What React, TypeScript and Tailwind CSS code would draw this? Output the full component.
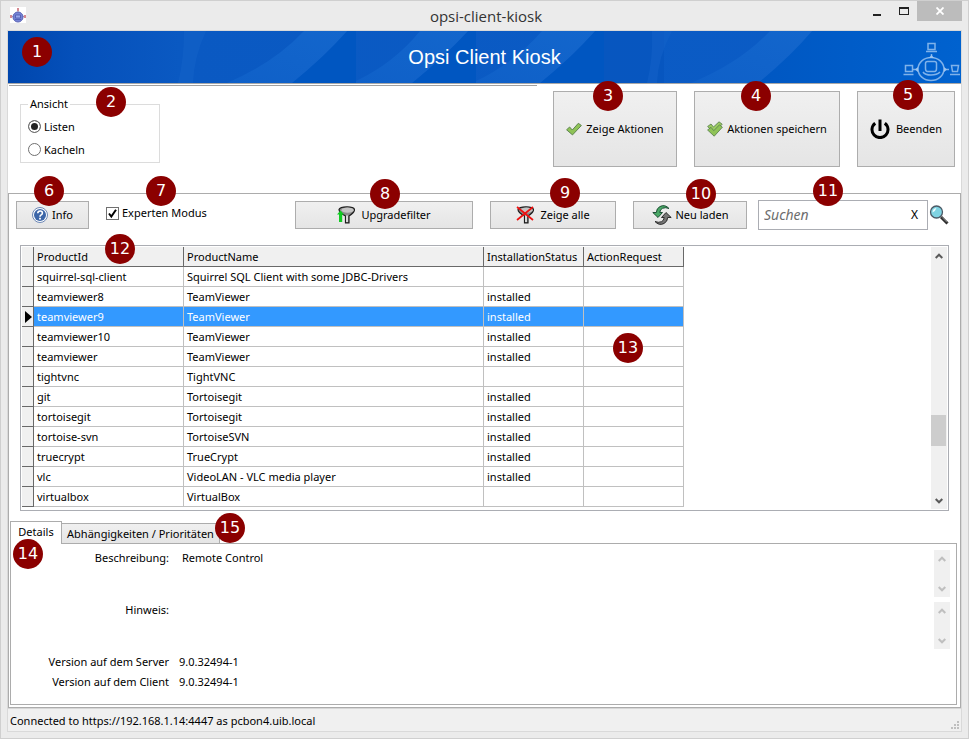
import React, { useState } from "react";

type Product = { id: string; name: string; status: string };

const products: Product[] = [
  { id: "squirrel-sql-client", name: "Squirrel SQL Client with some JDBC-Drivers", status: "" },
  { id: "teamviewer8", name: "TeamViewer", status: "installed" },
  { id: "teamviewer9", name: "TeamViewer", status: "installed" },
  { id: "teamviewer10", name: "TeamViewer", status: "installed" },
  { id: "teamviewer", name: "TeamViewer", status: "installed" },
  { id: "tightvnc", name: "TightVNC", status: "" },
  { id: "git", name: "Tortoisegit", status: "installed" },
  { id: "tortoisegit", name: "Tortoisegit", status: "installed" },
  { id: "tortoise-svn", name: "TortoiseSVN", status: "installed" },
  { id: "truecrypt", name: "TrueCrypt", status: "installed" },
  { id: "vlc", name: "VideoLAN - VLC media player", status: "installed" },
  { id: "virtualbox", name: "VirtualBox", status: "" },
];

/* Numbered call-out that floats over the control it explains. */
function Marker({ n, at }: { n: number; at: string }) {
  return (
    <span
      className={`pointer-events-none absolute z-10 flex size-[30px] items-center justify-center rounded-full bg-[#8b0000] font-['DejaVu_Sans',sans-serif] text-[16px] leading-none text-white ${at}`}
    >
      {n}
    </span>
  );
}

function AppIcon() {
  return (
    <svg className="size-4 bg-white" viewBox="0 0 16 16" aria-hidden="true">
      <path d="M8 1v5M1 9.500h14" stroke="#c9a0a8" strokeWidth="1" />
      <rect x="7" y="1" width="2" height="3" fill="#d58a92" />
      <rect x="0" y="8" width="2" height="3" fill="#d58a92" />
      <rect x="14" y="8" width="2" height="3" fill="#d58a92" />
      <circle cx="8" cy="10" r="5" fill="#7684d6" stroke="#5a62b4" />
      <path d="M5.500 8h5v3h-5zM5 12.500h6" fill="#98a6ec" stroke="#4b58ac" strokeWidth="0.800" />
    </svg>
  );
}

function Banner() {
  return (
    <svg className="absolute inset-0 size-full" viewBox="0 0 953 52" preserveAspectRatio="none" aria-hidden="true">
      <defs>
        <linearGradient id="base" x1="0" x2="1" y1="0" y2="0">
          <stop offset="0" stopColor="#0046ad" />
          <stop offset="0.070" stopColor="#0550ba" />
          <stop offset="0.180" stopColor="#0a59c2" />
          <stop offset="1" stopColor="#0b5cc6" />
        </linearGradient>
        <linearGradient id="sweep" x1="0" x2="1" y1="1" y2="0">
          <stop offset="0" stopColor="#0f60c8" />
          <stop offset="1" stopColor="#1366cc" />
        </linearGradient>
        <linearGradient id="tail" x1="0" x2="1" y1="0" y2="0">
          <stop offset="0" stopColor="#0057c2" />
          <stop offset="1" stopColor="#0062cf" />
        </linearGradient>
      </defs>
      <rect width="953" height="52" fill="url(#base)" />
      <path d="M176 0h22q-12 26-13 52h-15q6-24 6-52z" fill="#1463c8" opacity="0.550" />
      <path d="M339 0L318 22L284 52H348V0z" fill="#0056c1" />
      <path d="M296 0H339Q316 26 284 52H219Q266 32 296 0z" fill="url(#sweep)" />
      <path d="M460 0L438 22L404 52H468V0z" fill="#0056c1" />
      <path d="M412 0H460Q436 26 404 52H348V50Q386 32 412 0z" fill="url(#sweep)" />
      <path d="M587 0L566 22L532 52H596V0z" fill="#0056c1" />
      <path d="M534 0H587Q564 26 532 52H468V50Q506 32 534 0z" fill="url(#sweep)" />
      <rect x="596" width="60" height="52" fill="#0553bd" opacity="0.600" />
      <path d="M644 0h20q-14 26-15 52h-10q6-24 5-52z" fill="#1463c8" opacity="0.550" />
      <path d="M804 0L750 52H953V0z" fill="url(#tail)" />
      <path d="M762 0H804Q782 26 750 52H683Q732 32 762 0z" fill="url(#sweep)" />
    </svg>
  );
}

function NetworkLogo() {
  return (
    <svg
      className="absolute right-0 bottom-0 h-[42px] w-[58px]"
      viewBox="0 0 58 42"
      fill="none"
      stroke="#7fb2ea"
      strokeWidth="1.500"
      aria-hidden="true"
    >
      <ellipse cx="28" cy="28" rx="13" ry="11.500" />
      <path d="M22.500 22.500q0-2 2-2h7q2 0 2 2v5q0 3-2 3h-7q-2 0-2-3zM20 31q2 3 8 3t9-3" />
      <path d="M25 2.500h7v6h-7zM23 10.500h11M28.500 13v3" />
      <path d="M2.500 24.500h7v6h-7zM0.500 33.500h10" />
      <path d="M48.500 24.500h7l-1 6h-5zM47 33.500h10" />
      <path d="M10 28.500h5M42 28.500h4" />
      <path d="M26 17l2.500-3 2.500 3zM15 26v5l-3-2.500zM41 26v5l3-2.500z" fill="#9cc4f0" stroke="none" />
    </svg>
  );
}

function CheckIcon({ double = false }: { double?: boolean }) {
  return (
    <svg className="size-4 shrink-0" viewBox="0 0 16 16" aria-hidden="true">
      {double ? (
        <>
          <path d="M.6 5.500L4 3l2.500 3L12 .8l3.200 2.400L7 11.500z" fill="#9ccb62" stroke="#5f8452" strokeWidth="0.900" />
          <path d="M.6 9L4 6.300l2.800 3.400L12.500 3.800l2.900 2.400L7.200 15.200z" fill="#8fc357" stroke="#5f8452" strokeWidth="0.900" />
        </>
      ) : (
        <path d="M.6 8.800L3.600 6l2.700 3L12.300 2.300l3.100 2.200L6.500 13.900z" fill="#8fc357" stroke="#5f8452" />
      )}
    </svg>
  );
}

function PowerIcon() {
  return (
    <svg className="size-5 shrink-0" viewBox="0 0 20 20" fill="none" stroke="#000" strokeWidth="3" aria-hidden="true">
      <path d="M5.200 4.200a8 8 0 1 0 9.600 0M10 0.500v11.500" />
    </svg>
  );
}

function HelpIcon() {
  return (
    <svg className="size-4 shrink-0" viewBox="0 0 16 16" aria-hidden="true">
      <circle cx="8" cy="8" r="7.500" fill="#fff" stroke="#6c87b5" />
      <circle cx="8" cy="8" r="6" fill="#3c66a8" />
      <path d="M5.800 6.300q0-2.300 2.300-2.300t2.300 2q0 1.200-1.200 1.900T8 9.700" fill="none" stroke="#fff" strokeWidth="1.600" />
      <rect x="7.100" y="10.800" width="1.800" height="1.700" fill="#fff" />
    </svg>
  );
}

function FunnelIcon({ mode }: { mode: "up" | "off" }) {
  return (
    <svg className="h-[18px] w-[18px] shrink-0" viewBox="0 0 18 18" aria-hidden="true">
      <path
        d="M2 3.500Q3 .8 10 .8t7.500 2.700Q17.500 6.500 12 10V16.800H8.500V10Q2 6.500 2 3.500z"
        fill="#8c8c8c"
        stroke="#1c1c1c"
        strokeWidth="1.200"
      />
      <ellipse cx="10.500" cy="4.200" rx="6" ry="2.600" fill="#c4c4c4" />
      <path d="M10 9.500v6.500" stroke="#f4f4f4" strokeWidth="1.500" />
      {mode === "up" ? (
        <path d="M3.500 4.500L7 8.500H5.200V16H2V8.500H0z" fill="#11cc22" />
      ) : (
        <path d="M1 1l16 13M17 1L1 14" stroke="#ee1111" strokeWidth="1.700" />
      )}
    </svg>
  );
}

function ReloadIcon() {
  return (
    <svg className="size-5 shrink-0" viewBox="0 0 20 20" aria-hidden="true">
      <path
        d="M17 3.500Q13 -1 8 1.500Q4.500 3.300 4.300 7.500H.8L6 12.500l4.500-5H7.800Q8 4.500 10.500 3.300Q13.500 2 17 3.500z"
        fill="#4aa866"
        stroke="#12422a"
        strokeWidth="0.900"
      />
      <path
        d="M3 16.500Q7 21 12 18.500Q15.500 16.700 15.700 12.500H19.200L14 7.500l-4.500 5h2.700Q12 15.500 9.500 16.700Q6.500 18 3 16.500z"
        fill="#777"
        stroke="#1f1f1f"
        strokeWidth="0.900"
      />
    </svg>
  );
}

function MagnifierIcon() {
  return (
    <svg className="size-5" viewBox="0 0 20 20" aria-hidden="true">
      <path d="M12 12l6.500 6.500" stroke="#2b2b2b" strokeWidth="3" />
      <path d="M13 12.300l5 5" stroke="#9a9a9a" strokeWidth="0.900" />
      <circle cx="7.500" cy="7" r="6" fill="#7fd3e2" stroke="#4c5a66" strokeWidth="1.300" />
      <path d="M3.500 7.500Q3.500 3.500 7.500 3q-1 3-4 4.500z" fill="#effcff" />
    </svg>
  );
}

function Chevron({ dir }: { dir: "up" | "down" }) {
  return (
    <svg className="h-[6px] w-[8px]" viewBox="0 0 8 6" fill="none" stroke="currentColor" strokeWidth="2" aria-hidden="true">
      <path d={dir === "up" ? "M.7 5L4 1.700L7.300 5" : "M.7 1L4 4.300L7.300 1"} />
    </svg>
  );
}

function ScrollBar({ tone, thumb = false }: { tone: string; thumb?: boolean }) {
  return (
    <div className={`flex w-4 shrink-0 flex-col justify-between bg-[#f0f0f0] ${tone}`}>
      <button type="button" aria-label="Nach oben" className="flex h-[17px] items-center justify-center">
        <Chevron dir="up" />
      </button>
      {thumb && (
        <div className="flex flex-1 flex-col pr-px">
          <div className="grow-[151]" />
          <div className="h-[31px] bg-[#cdcdcd]" />
          <div className="grow-[46]" />
        </div>
      )}
      <button type="button" aria-label="Nach unten" className="flex h-[17px] items-center justify-center">
        <Chevron dir="down" />
      </button>
    </div>
  );
}

function PushButton({ className, children }: { className: string; children: React.ReactNode }) {
  return (
    <button
      type="button"
      className={`relative flex shrink-0 items-center justify-center border border-[#adadad] bg-linear-to-b from-[#f0f0f0] to-[#e5e5e5] whitespace-nowrap ${className}`}
    >
      {children}
    </button>
  );
}

function ViewOption({ label, checked, onSelect }: { label: string; checked: boolean; onSelect: () => void }) {
  return (
    <label className="flex h-[23px] items-center gap-[3px]">
      <input
        type="radio"
        name="view"
        checked={checked}
        onChange={onSelect}
        className="size-[13px] appearance-none rounded-full border border-[#707070] bg-white checked:bg-[#222] checked:shadow-[inset_0_0_0_2px_#fff]"
      />
      {label}
    </label>
  );
}

export default function App() {
  const [view, setView] = useState("Listen");
  const [expert, setExpert] = useState(true);
  const [selected, setSelected] = useState("teamviewer9");
  const [query, setQuery] = useState("");

  const headCell = "h-5 border-r border-b border-[#696969] bg-[#f0f0f0] px-[3px] text-left font-normal whitespace-nowrap";
  const cell = "h-5 border-r border-b border-[#c0c0c0] px-[3px] whitespace-nowrap";

  return (
    <div className="min-h-screen border border-[#cfcfcf] bg-[#ebebeb] px-[6px] pb-[6px] font-['Noto_Sans','Open_Sans',sans-serif] text-[11px] leading-4 text-black">
      <div className="flex h-[29px] items-start">
        <div className="flex flex-1 pt-[6px] pl-[3px]">
          <AppIcon />
        </div>
        <h1 className="pt-[5px] font-['Open_Sans',sans-serif] text-[15px] leading-5 text-[#333]">opsi-client-kiosk</h1>
        <div className="flex flex-1 justify-end">
          <button type="button" aria-label="Minimieren" className="flex h-5 w-[27px] items-center justify-center">
            <span className="mt-[7px] h-[2px] w-2 bg-[#222]" />
          </button>
          <button type="button" aria-label="Maximieren" className="flex h-5 w-[27px] items-center justify-center">
            <span className="h-2 w-[10px] border border-t-2 border-[#222]" />
          </button>
          <button type="button" aria-label="Schließen" className="flex h-5 w-[45px] items-center justify-center bg-[#bcbcbc]">
            <svg className="size-2" viewBox="0 0 8 8" stroke="#fff" strokeWidth="1.800" aria-hidden="true">
              <path d="M.5.5l7 7M7.500.5l-7 7" />
            </svg>
          </button>
        </div>
      </div>

      <div className="border border-[#d9d9d9] bg-white">
        <header className="relative flex h-[53px] items-center justify-center border-b border-[#a8a8a8]">
          <Banner />
          <NetworkLogo />
          <h2 className="relative font-['Liberation_Sans',Arial,sans-serif] text-[20px] leading-6 text-white">
            Opsi Client Kiosk
          </h2>
          <Marker n={1} at="left-[14px] top-[6px]" />
        </header>

        <div className="flex items-start pt-px pr-[6px] pb-[26px] pl-px">
          <div className="flex-1 border-t border-[#a0a0a0] pt-[10px] pl-[11px]">
            <fieldset className="relative h-[67px] w-[140px] border border-[#dcdcdc] pl-[7px]">
              <legend className="px-[2px]">Ansicht</legend>
              <div className="pt-[3px]">
                {["Listen", "Kacheln"].map((v) => (
                  <ViewOption key={v} label={v} checked={view === v} onSelect={() => setView(v)} />
                ))}
              </div>
              <Marker n={2} at="left-[75px] -top-[25px]" />
            </fieldset>
          </div>
          <div className="mt-[6px] ml-4 flex gap-[17px]">
            <PushButton className="h-[76px] w-[124px] gap-1">
              <CheckIcon />
              Zeige Aktionen
              <Marker n={3} at="left-[39px] -top-[11px]" />
            </PushButton>
            <PushButton className="h-[76px] w-[146px] gap-1">
              <CheckIcon double />
              Aktionen speichern
              <Marker n={4} at="left-[46px] -top-[11px]" />
            </PushButton>
            <PushButton className="h-[76px] w-[98px] gap-[6px]">
              <PowerIcon />
              Beenden
              <Marker n={5} at="left-[35px] -top-[12px]" />
            </PushButton>
          </div>
        </div>

        <main className="border border-[#acacac]">
          <div className="flex items-center pt-[6px] pr-[11px] pl-[7px]">
            <PushButton className="h-7 w-[73px] gap-1">
              <HelpIcon />
              Info
              <Marker n={6} at="left-[17px] -top-[26px]" />
            </PushButton>
            <label className="relative mb-1 ml-[17px] flex items-center gap-[3px] whitespace-nowrap">
              <span className="grid">
                <input
                  type="checkbox"
                  checked={expert}
                  onChange={(e) => setExpert(e.target.checked)}
                  className="peer col-start-1 row-start-1 size-[13px] appearance-none border border-[#707070] bg-white"
                />
                <svg
                  className="pointer-events-none invisible col-start-1 row-start-1 size-[13px] peer-checked:visible"
                  viewBox="0 0 13 13"
                  fill="none"
                  stroke="#000"
                  strokeWidth="2"
                  aria-hidden="true"
                >
                  <path d="M3 6.500l2.300 3L10 2.800" />
                </svg>
              </span>
              Experten Modus
              <Marker n={7} at="left-[40px] -top-[29px]" />
            </label>
            <div className="ml-auto flex gap-[17px]">
              <PushButton className="h-7 w-[178px] gap-[6px]">
                <FunnelIcon mode="up" />
                Upgradefilter
                <Marker n={8} at="left-[74px] -top-[23px]" />
              </PushButton>
              <PushButton className="h-7 w-[126px] gap-[6px]">
                <FunnelIcon mode="off" />
                Zeige alle
                <Marker n={9} at="left-[59px] -top-[24px]" />
              </PushButton>
              <PushButton className="h-7 w-[114px] gap-1">
                <ReloadIcon />
                Neu laden
                <Marker n={10} at="left-[52px] -top-[23px]" />
              </PushButton>
            </div>
            <div className="relative ml-[11px] flex h-[30px] w-[170px] items-center border border-[#abadb3] bg-white">
              <input
                type="text"
                aria-label="Suchen"
                placeholder="Suchen"
                value={query}
                onChange={(e) => setQuery(e.target.value)}
                className="h-7 min-w-0 flex-1 pb-[2px] pl-[5px] text-[14px] outline-none placeholder:text-[#6d6d6d] placeholder:italic"
              />
              <button type="button" aria-label="Suche leeren" onClick={() => setQuery("")} className="w-[25px] text-[12px]">
                X
              </button>
              <Marker n={11} at="left-[54px] -top-[25px]" />
            </div>
            <button type="button" aria-label="Suche starten" className="ml-px">
              <MagnifierIcon />
            </button>
          </div>

          <div className="relative mx-[11px] mt-[15px] flex justify-between border border-[#abadb3] p-px">
            <table className="mb-[2px] w-[662px] table-fixed border-separate border-spacing-0">
              <colgroup>
                <col className="w-[12px]" />
                <col className="w-[150px]" />
                <col className="w-[300px]" />
                <col className="w-[100px]" />
                <col className="w-[100px]" />
              </colgroup>
              <thead>
                <tr>
                  <th className="h-5 border-r border-b border-[#696969] bg-[#f0f0f0] p-0" aria-label="Auswahl" />
                  <th className={headCell}>ProductId</th>
                  <th className={headCell}>ProductName</th>
                  <th className={headCell}>InstallationStatus</th>
                  <th className={headCell}>ActionRequest</th>
                </tr>
              </thead>
              <tbody>
                {products.map((p) => (
                  <tr
                    key={p.id}
                    onClick={() => setSelected(p.id)}
                    className={p.id === selected ? "bg-[#3399ff] text-white" : "bg-white"}
                  >
                    <td className="h-5 border-r border-b border-[#696969] bg-[#f0f0f0] p-0">
                      {p.id === selected && (
                        <svg className="ml-[3px] h-3 w-[7px]" viewBox="0 0 7 12" aria-hidden="true">
                          <path d="M0 0L7 6L0 12z" />
                        </svg>
                      )}
                    </td>
                    <td className={cell}>{p.id}</td>
                    <td className={cell}>{p.name}</td>
                    <td className={cell}>{p.status}</td>
                    <td className={cell} />
                  </tr>
                ))}
              </tbody>
            </table>
            <ScrollBar tone="text-[#5a5a5a]" thumb />
            <Marker n={12} at="left-[84px] -top-[12px]" />
            <Marker n={13} at="left-[592px] top-[87px]" />
          </div>

          <div className="mt-[10px] ml-px flex items-end" role="tablist">
            <button
              type="button"
              role="tab"
              aria-selected="true"
              className="relative -mb-px h-[23px] w-[52px] border border-b-0 border-[#acacac] bg-white pb-[2px]"
            >
              Details
              <Marker n={14} at="left-[2px] top-[17px]" />
            </button>
            <button
              type="button"
              role="tab"
              aria-selected="false"
              className="relative h-5 w-[158px] border-t border-r border-[#acacac] bg-linear-to-b from-[#f0f0f0] to-[#e5e5e5] whitespace-nowrap"
            >
              Abhängigkeiten / Prioritäten
              <Marker n={15} at="left-[153px] -top-[11px]" />
            </button>
          </div>
          <div className="mb-[2px] ml-px mr-[3px] border border-[#acacac] bg-white pt-[6px] pr-[6px] pb-[10px]" role="tabpanel">
            <dl>
              <div className="mb-[5px] flex h-[47px]">
                <dt className="w-[158px] text-right">Beschreibung:</dt>
                <dd className="flex-1 pl-[13px]">Remote Control</dd>
                <dd className="flex">
                  <ScrollBar tone="text-[#bfbfbf]" />
                </dd>
              </div>
              <div className="mb-[5px] flex h-[47px]">
                <dt className="w-[158px] text-right">Hinweis:</dt>
                <dd className="flex flex-1 justify-end">
                  <ScrollBar tone="text-[#bfbfbf]" />
                </dd>
              </div>
              <div className="flex h-5">
                <dt className="w-[158px] text-right">Version auf dem Server</dt>
                <dd className="pl-[10px]">9.0.32494-1</dd>
              </div>
              <div className="flex h-5">
                <dt className="w-[158px] text-right">Version auf dem Client</dt>
                <dd className="pl-[10px]">9.0.32494-1</dd>
              </div>
            </dl>
          </div>
        </main>

        <footer className="flex h-[23px] items-center justify-between border-t border-[#d7d7d7] bg-[#f0f0f0] px-[2px]">
          <span className="pt-px">Connected to https://192.168.1.14:4447 as pcbon4.uib.local</span>
          <svg className="mb-[2px] size-2 self-end" viewBox="0 0 8 8" fill="#bfbfbf" aria-hidden="true">
            <path d="M6 0h2v2H6zM3 3h2v2H3zM6 3h2v2H6zM0 6h2v2H0zM3 6h2v2H3zM6 6h2v2H6z" />
          </svg>
        </footer>
      </div>
    </div>
  );
}
